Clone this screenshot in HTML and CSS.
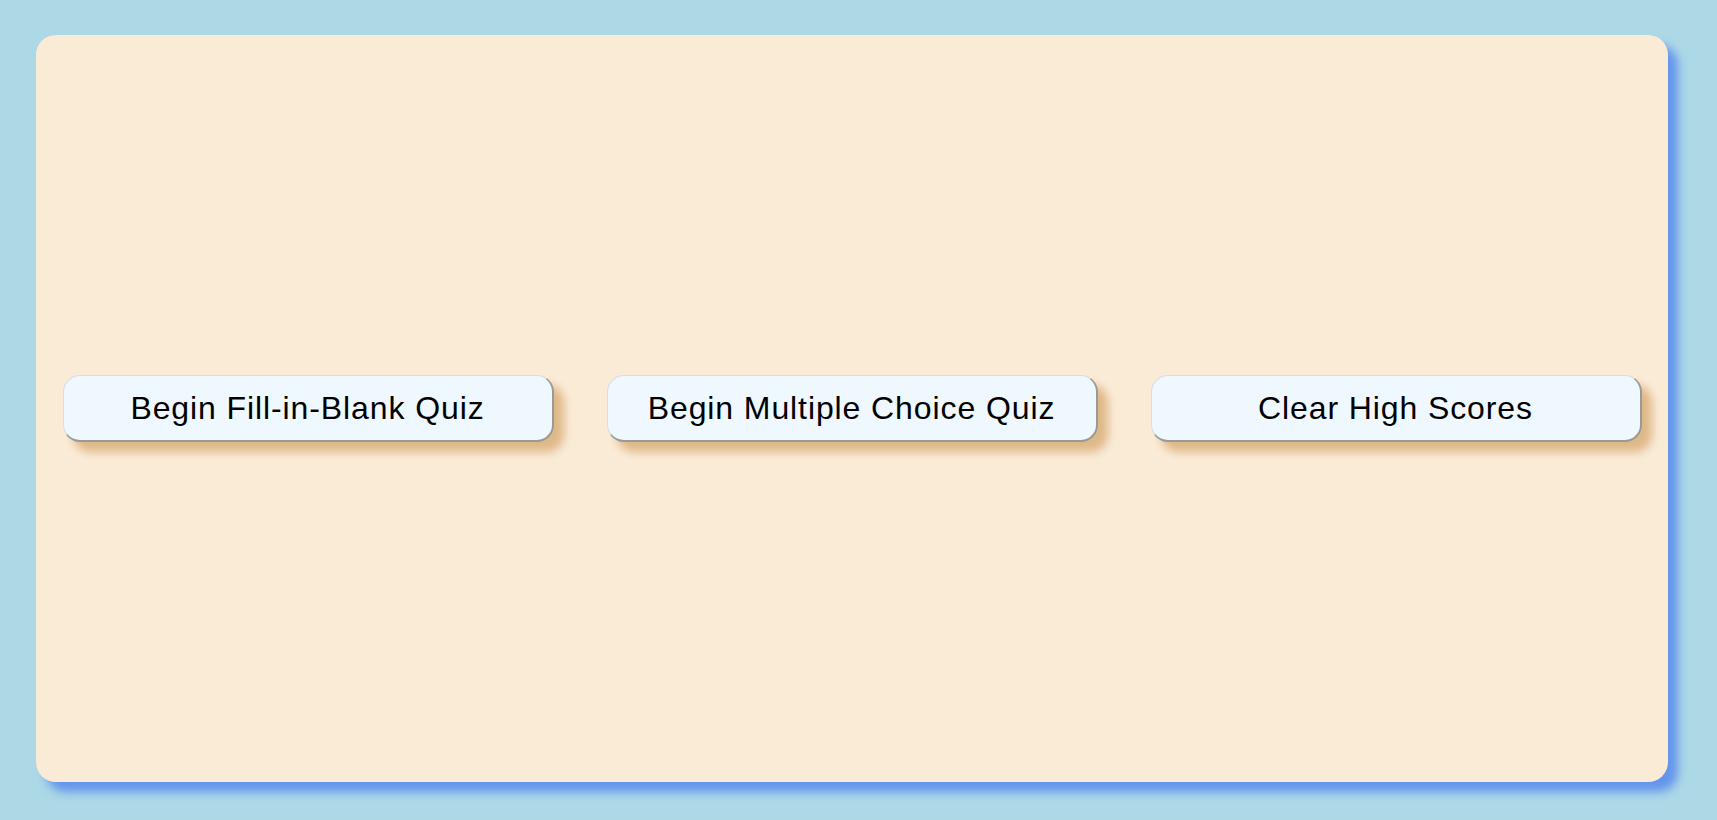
FILE: index.html
```html
<!DOCTYPE html>
<html lang="en">
<head>
<meta charset="utf-8">
<title>Quiz</title>
<link rel="stylesheet" href="styles.css">
</head>
<body>
<main class="card">
  <button class="btn" type="button">Begin Fill-in-Blank Quiz</button>
  <button class="btn" type="button">Begin Multiple Choice Quiz</button>
  <button class="btn" type="button">Clear High Scores</button>
</main>
</body>
</html>
```
FILE: styles.css
```css
html, body {
  margin: 0;
  height: 100%;
}
body {
  background: #add8e6;
  box-sizing: border-box;
  padding: 35px 49px 38px 36px;
  display: flex;
  font-family: "Liberation Sans", Arial, sans-serif;
}
.card {
  flex: 1;
  background: #faebd7;
  border-radius: 20px;
  box-shadow: 10px 10px 10px #6495ed;
  display: flex;
  align-items: center;
  justify-content: space-around;
}
.btn {
  width: 491px;
  height: 67px;
  box-sizing: border-box;
  background: #f0f8ff;
  border-style: solid;
  border-width: 1px 2px 2px 1px;
  border-color: #d8dde3 #999 #999 #d8dde3;
  border-radius: 17px;
  box-shadow: 10px 10px 10px #deb887;
  font-family: "Liberation Sans", Arial, sans-serif;
  font-size: 32px;
  letter-spacing: 0.9px;
  color: #000;
  padding: 0;
}
```
